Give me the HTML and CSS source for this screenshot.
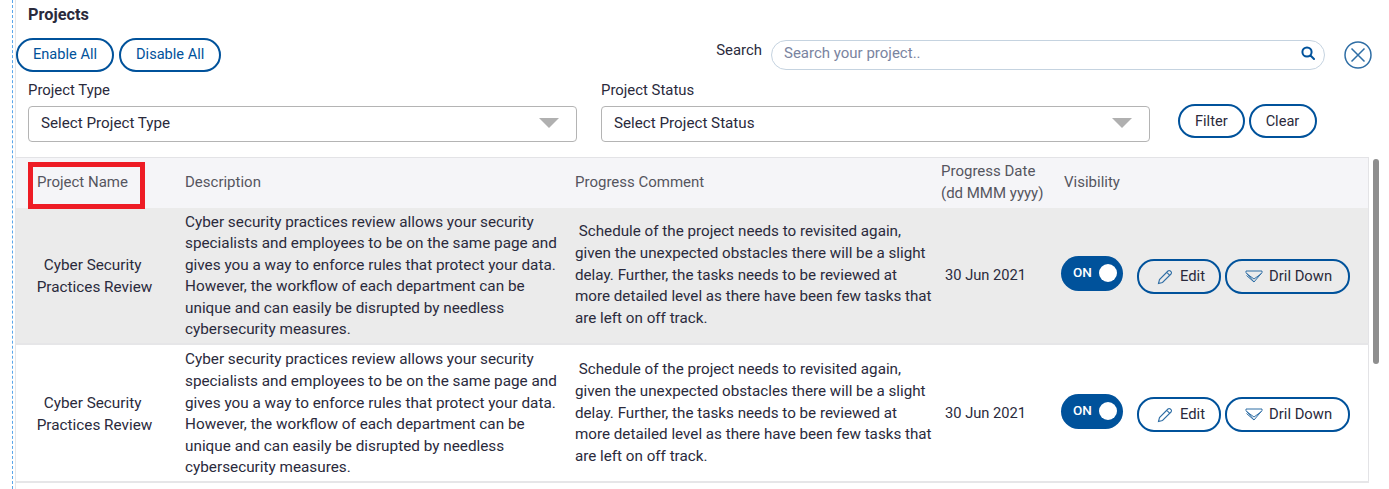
FILE: index.html
```html
<!DOCTYPE html>
<html lang="en">
<head>
<meta charset="utf-8">
<title>Projects</title>
<link rel="stylesheet" href="styles.css">
</head>
<body>
<div class="page">
  <div class="inner">
  <h1 class="title">Projects</h1>
  <div class="toolbar">
    <div class="btn-group">
      <button class="btn btn-blue">Enable All</button>
      <button class="btn btn-blue">Disable All</button>
    </div>
    <div class="search-area">
      <label class="search-label">Search</label>
      <div class="search-box">
        <span class="search-placeholder">Search your project..</span>
        <svg class="search-icon" width="14" height="14" viewBox="0 0 14 14"><circle cx="6" cy="6" r="4.6" fill="none" stroke="#00529b" stroke-width="2"/><path d="M9.5 9.5L13 13" stroke="#00529b" stroke-width="2" stroke-linecap="round"/></svg>
      </div>
      <svg class="close-icon" width="28" height="28" viewBox="0 0 28 28"><circle cx="14" cy="14" r="13" fill="none" stroke="#2f6ea5" stroke-width="1.5"/><path d="M7.5 7.5L20.5 20.5M20.5 7.5L7.5 20.5" stroke="#2f6ea5" stroke-width="1.5"/></svg>
    </div>
  </div>
  <div class="filters">
    <div class="field">
      <div class="field-label">Project Type</div>
      <div class="select"><span>Select Project Type</span><i class="caret"></i></div>
    </div>
    <div class="field">
      <div class="field-label">Project Status</div>
      <div class="select"><span>Select Project Status</span><i class="caret"></i></div>
    </div>
    <div class="btn-group filter-actions">
      <button class="btn">Filter</button>
      <button class="btn">Clear</button>
    </div>
  </div>
  <div class="table-wrap">
    <table class="table">
      <colgroup><col class="c1"><col class="c2"><col class="c3"><col class="c4"><col class="c5"></colgroup>
      <thead>
        <tr>
          <th>Project Name</th>
          <th>Description</th>
          <th>Progress Comment</th>
          <th class="th-date">Progress Date<br>(dd MMM yyyy)</th>
          <th>Visibility</th>
        </tr>
      </thead>
      <tbody>
        <tr class="shaded">
          <td class="name">Cyber Security&nbsp;<br>Practices Review</td>
          <td>Cyber security practices review allows your security specialists and employees to be on the same page and gives you a way to enforce rules that protect your data. However, the workflow of each department can be unique and can easily be disrupted by needless cybersecurity measures.</td>
          <td class="comment">&nbsp;Schedule of the project needs to revisited again, given the unexpected obstacles there will be a slight delay. Further, the tasks needs to be reviewed at more detailed level as there have been few tasks that are left on off track.</td>
          <td class="date">30 Jun 2021</td>
          <td class="actions-cell">
            <div class="actions">
              <div class="toggle"><span>ON</span><i class="knob"></i></div>
              <button class="btn btn-row btn-edit"><svg width="16" height="16" viewBox="0 0 16 16"><path d="M1.5 14.5l1-4L11 2a1.6 1.6 0 0 1 2.3 0l.7.7a1.6 1.6 0 0 1 0 2.3L5.5 13.5z M9.8 3.3l3 3" fill="none" stroke="#2f6ea5" stroke-width="1.1"/></svg>Edit</button>
              <button class="btn btn-row btn-drill"><svg width="18" height="14" viewBox="0 0 18 14"><path d="M1 1h16v1.5L9 12 1 2.5z M1.5 3.5L9 9l7.5-5.5 M1.5 5.5L9 12" fill="none" stroke="#2f6ea5" stroke-width="1"/></svg>Dril Down</button>
            </div>
          </td>
        </tr>
        <tr>
          <td class="name">Cyber Security&nbsp;<br>Practices Review</td>
          <td>Cyber security practices review allows your security specialists and employees to be on the same page and gives you a way to enforce rules that protect your data. However, the workflow of each department can be unique and can easily be disrupted by needless cybersecurity measures.</td>
          <td class="comment">&nbsp;Schedule of the project needs to revisited again, given the unexpected obstacles there will be a slight delay. Further, the tasks needs to be reviewed at more detailed level as there have been few tasks that are left on off track.</td>
          <td class="date">30 Jun 2021</td>
          <td class="actions-cell">
            <div class="actions">
              <div class="toggle"><span>ON</span><i class="knob"></i></div>
              <button class="btn btn-row btn-edit"><svg width="16" height="16" viewBox="0 0 16 16"><path d="M1.5 14.5l1-4L11 2a1.6 1.6 0 0 1 2.3 0l.7.7a1.6 1.6 0 0 1 0 2.3L5.5 13.5z M9.8 3.3l3 3" fill="none" stroke="#2f6ea5" stroke-width="1.1"/></svg>Edit</button>
              <button class="btn btn-row btn-drill"><svg width="18" height="14" viewBox="0 0 18 14"><path d="M1 1h16v1.5L9 12 1 2.5z M1.5 3.5L9 9l7.5-5.5 M1.5 5.5L9 12" fill="none" stroke="#2f6ea5" stroke-width="1"/></svg>Dril Down</button>
            </div>
          </td>
        </tr>
      </tbody>
    </table>
    <div class="scrollbar"></div>
  </div>
  </div>
  <div class="red-box"></div>
</div>
</body>
</html>
```
FILE: styles.css
```css
* { box-sizing: border-box; }
html, body { margin: 0; padding: 0; height: 100%; overflow: hidden; background: #fff; }
body { font-family: Roboto, "Liberation Sans", sans-serif; font-size: 15.3px; color: #2a2a3c; }
.page { position: relative; height: 489px; margin-left: 12px; border-left: 1px dashed #5ba7ea; padding-left: 2px; }
.inner { height: 100%; border-left: 1px solid #e6e6e8; }
.title { margin: 0; padding: 6px 0 0 12px; font-size: 16.3px; font-weight: 700; line-height: 17px; color: #2a2a3c; }
.toolbar { display: flex; justify-content: space-between; margin-top: 15px; height: 34px; }
.btn-group { display: flex; gap: 4px; }
.toolbar .btn-group { gap: 5px; }
.btn { height: 34px; padding: 0 15px 2px; border: 2px solid #00529b; border-radius: 17px; background: transparent; font: inherit; font-size: 14.6px; color: #2a2a3c; white-space: nowrap; }
.btn-blue { color: #00529b; }
.search-area { display: flex; align-items: flex-start; }
.search-label { margin-right: 9px; line-height: 24px; font-size: 14.9px; }
.search-box { display: flex; align-items: center; justify-content: space-between; width: 554px; height: 30px; margin-top: 2px; padding: 0 9px 4px 12px; border: 1px solid #c5d3e0; border-radius: 15px; margin-right: 19px; }
.search-placeholder { color: #7a84a0; font-size: 15px; }
.search-icon { margin-bottom: 1px; }
.close-icon { margin: 3px 17px 0 0; }
.filters { display: flex; margin-top: 6px; padding-left: 12px; }
.field { width: 549px; margin-right: 24px; }
.field-label { line-height: 24px; font-size: 14.9px; height: 24px; }
.select { display: flex; align-items: center; justify-content: space-between; height: 36px; margin-top: 4px; padding: 0 17px 2px 12px; border: 1px solid #b4b4b4; border-radius: 4px; font-size: 15.2px; }
.caret { border-left: 10px solid transparent; border-right: 10px solid transparent; border-top: 10px solid #b0b0b0; }
.filter-actions { margin: 26px 0 0 4px; }
.filter-actions .btn { padding: 0 15px 0; }
.filter-actions .btn:last-child { padding: 0 16px 0 15px; }
.table-wrap { display: flex; margin-top: 15px; }
.table { width: 1352px; table-layout: fixed; border-collapse: collapse; border-top: 1px solid #e3e3e6; border-right: 1px solid #e3e3e6; }
.c1 { width: 157px; } .c2 { width: 390px; } .c3 { width: 373px; } .c4 { width: 116px; } .c5 { width: 316px; }
th { height: 50px; padding: 0 12px; background: #f5f5f8; font-weight: 400; font-size: 15px; text-align: left; color: #55555f; line-height: 21.6px; }
th:first-child { padding-left: 21px; }
th.th-date { padding: 0 0 0 5px; }
td { padding: 4px 4px 2.4px 12px; line-height: 21.6px; vertical-align: middle; border-bottom: 2px solid #e6e6e8; }
tr.shaded td { background: #ebebeb; }
td.name { text-align: center; padding: 2.4px 5px 0; }
td.comment { padding: 0 3px 0 12px; line-height: 21.75px; font-size: 15.2px; }
td.date { padding: 0 0 0 9px; font-size: 14.7px; }
.actions { display: flex; align-items: flex-start; }
td.actions-cell { padding: 0 0 0.6px 9px; }
.toggle { display: flex; align-items: center; justify-content: space-between; width: 62px; height: 35px; margin-right: 14px; padding: 0 6px 2px 12px; border-radius: 18px; background: #00529b; color: #fff; font-size: 13.5px; font-weight: 500; }
.knob { width: 18px; height: 18px; border-radius: 50%; background: #fff; }
.btn-row { display: flex; align-items: center; height: 35px; margin-top: 3px; font-size: 14.8px; }
.btn-edit { padding: 0 14px 0 18px; margin-right: 4px; }
.btn-edit svg { margin-right: 7px; }
.btn-drill { padding: 0 16px 0 18px; }
.btn-drill svg { margin-right: 6px; }
.scrollbar { width: 6px; height: 205px; margin: 2px 0 0 4px; border-radius: 3px; background: #8e8e8e; }
.red-box { position: absolute; left: 15px; top: 162px; width: 117px; height: 47px; border: 5px solid #ee1c25; }
```
